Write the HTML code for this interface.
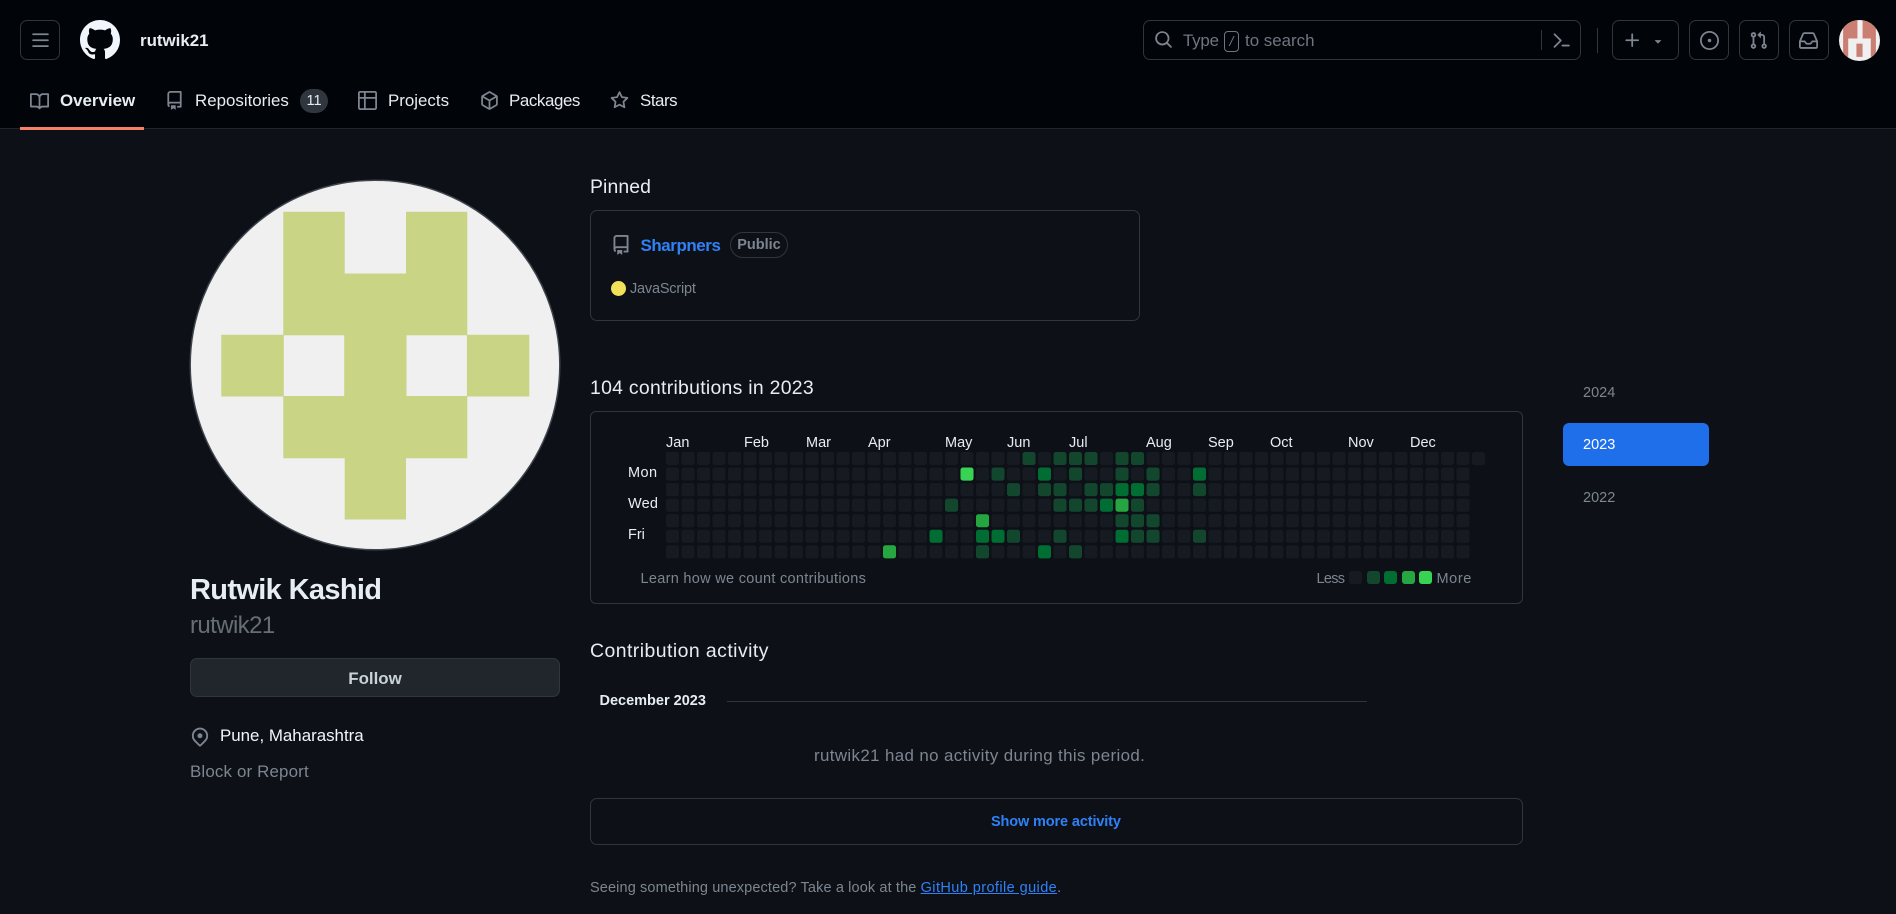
<!DOCTYPE html>
<html lang="en">
<head>
<meta charset="utf-8">
<title>rutwik21</title>
<style>
html,body{margin:0;padding:0;width:1896px;height:914px;overflow:hidden;background:#0d1117;font-family:"Liberation Sans",sans-serif;color:#e6edf3}
.a{position:absolute;box-sizing:border-box}
.t{position:absolute;white-space:nowrap;line-height:24px;height:24px}
.f14{font-size:14.5px}.f17{font-size:16.9px}.f19{font-size:19.4px}
.g{color:#7d8590}.b{font-weight:700}
.btn{position:absolute;box-sizing:border-box;top:20px;height:40px;border:1px solid #30363d;border-radius:7px}
svg.i{position:absolute;fill:#7d8590;display:block}
.m{color:#e6edf3}
a{color:inherit;text-decoration:none}
</style>
</head>
<body>
<!-- header -->
<div class="a" style="left:0;top:0;width:1896px;height:129px;background:#010409;border-bottom:1px solid #21262d"></div>
<div class="a" style="left:20px;top:127px;width:124px;height:2.5px;background:#f78166"></div>

<div class="btn" style="left:20px;width:40px"></div>
<svg class="i" style="left:31px;top:31px" width="19" height="19" viewBox="0 0 16 16"><path d="M1 2.75A.75.75 0 0 1 1.75 2h12.5a.75.75 0 0 1 0 1.5H1.75A.75.75 0 0 1 1 2.75Zm0 5A.75.75 0 0 1 1.75 7h12.5a.75.75 0 0 1 0 1.5H1.75A.75.75 0 0 1 1 7.75ZM1.75 12h12.5a.75.75 0 0 1 0 1.5H1.75a.75.75 0 0 1 0-1.5Z"/></svg>
<svg class="i" style="left:80px;top:20px;fill:#f0f6fc" width="40" height="40" viewBox="0 0 16 16"><path d="M8 0c4.42 0 8 3.58 8 8a8.013 8.013 0 0 1-5.45 7.59c-.4.08-.55-.17-.55-.38 0-.27.01-1.13.01-2.2 0-.75-.25-1.23-.54-1.48 1.78-.2 3.65-.88 3.65-3.95 0-.88-.31-1.59-.82-2.15.08-.2.36-1.02-.08-2.12 0 0-.67-.22-2.2.82-.64-.18-1.32-.27-2-.27-.68 0-1.36.09-2 .27-1.53-1.03-2.2-.82-2.2-.82-.44 1.1-.16 1.92-.08 2.12-.51.56-.82 1.28-.82 2.15 0 3.06 1.86 3.75 3.64 3.95-.23.2-.44.55-.51 1.07-.46.21-1.61.55-2.33-.66-.15-.24-.6-.83-1.23-.82-.67.01-.27.38.01.53.34.19.73.9.82 1.13.16.45.68 1.31 2.69.94 0 .67.01 1.3.01 1.49 0 .21-.15.45-.55.38A7.995 7.995 0 0 1 0 8c0-4.42 3.58-8 8-8Z"/></svg>
<span class="t f17 b" style="left:140px;top:29px;color:#e6edf3">rutwik21</span>

<svg class="i" style="left:30px;top:92px" width="19" height="19" viewBox="0 0 16 16"><path d="M0 1.75A.75.75 0 0 1 .75 1h4.253c1.227 0 2.317.59 3 1.501A3.743 3.743 0 0 1 11.006 1h4.245a.75.75 0 0 1 .75.75v10.5a.75.75 0 0 1-.75.75h-4.507a2.25 2.25 0 0 0-1.591.659l-.622.621a.75.75 0 0 1-1.06 0l-.622-.621A2.25 2.25 0 0 0 5.258 13H.75a.75.75 0 0 1-.75-.75Zm7.251 10.324.004-5.073-.002-2.253A2.25 2.25 0 0 0 5.003 2.5H1.5v9h3.757a3.75 3.75 0 0 1 1.994.574ZM8.755 4.75l-.004 7.322a3.752 3.752 0 0 1 1.992-.572H14.5v-9h-3.495a2.25 2.25 0 0 0-2.25 2.25Z"/></svg>
<span class="t f17 b" style="left:60px;top:89px">Overview</span>
<svg class="i" style="left:165px;top:91px" width="19" height="19" viewBox="0 0 16 16"><path d="M2 2.5A2.5 2.5 0 0 1 4.5 0h8.75a.75.75 0 0 1 .75.75v12.5a.75.75 0 0 1-.75.75h-2.5a.75.75 0 0 1 0-1.5h1.75v-2h-8a1 1 0 0 0-.714 1.7.75.75 0 1 1-1.072 1.05A2.495 2.495 0 0 1 2 11.5Zm10.5-1h-8a1 1 0 0 0-1 1v6.708A2.486 2.486 0 0 1 4.5 9h8ZM5 12.25a.25.25 0 0 1 .25-.25h3.5a.25.25 0 0 1 .25.25v3.25a.25.25 0 0 1-.4.2l-1.45-1.087a.249.249 0 0 0-.3 0L5.4 15.7a.25.25 0 0 1-.4-.2Z"/></svg>
<span class="t f17" style="left:195px;top:89px">Repositories</span>
<div class="a" style="left:300px;top:88.5px;width:28px;height:24px;border-radius:12px;background:#30363d;color:#e6edf3;font-size:14.5px;line-height:24px;text-align:center">11</div>
<svg class="i" style="left:358px;top:91px" width="19" height="19" viewBox="0 0 16 16"><path d="M0 1.75C0 .784.784 0 1.75 0h12.5C15.216 0 16 .784 16 1.75v12.5A1.75 1.75 0 0 1 14.25 16H1.75A1.75 1.75 0 0 1 0 14.25ZM6.5 6.5v8h7.75a.25.25 0 0 0 .25-.25V6.5Zm8-1.5V1.75a.25.25 0 0 0-.25-.25H6.5V5Zm-13 1.5v7.75c0 .138.112.25.25.25H5v-8ZM5 5V1.5H1.75a.25.25 0 0 0-.25.25V5Z"/></svg>
<span class="t f17" style="left:388px;top:89px">Projects</span>
<svg class="i" style="left:480px;top:91px" width="19" height="19" viewBox="0 0 16 16"><path d="m8.878.392 5.25 3.045c.54.314.872.89.872 1.514v6.098a1.75 1.75 0 0 1-.872 1.514l-5.25 3.045a1.75 1.75 0 0 1-1.756 0l-5.25-3.045A1.75 1.75 0 0 1 1 11.049V4.951c0-.624.332-1.201.872-1.514L7.122.392a1.75 1.75 0 0 1 1.756 0ZM7.875 1.69l-4.63 2.685L8 7.133l4.755-2.758-4.63-2.685a.248.248 0 0 0-.25 0ZM2.5 5.677v5.372c0 .09.047.171.125.216l4.625 2.683V8.432Zm6.25 8.271 4.625-2.683a.25.25 0 0 0 .125-.216V5.677L8.75 8.432Z"/></svg>
<span class="t f17" style="left:509px;top:89px;letter-spacing:-.4px">Packages</span>
<svg class="i" style="left:610px;top:91px" width="19" height="19" viewBox="0 0 16 16"><path d="M8 .25a.75.75 0 0 1 .673.418l1.882 3.815 4.21.612a.75.75 0 0 1 .416 1.279l-3.046 2.97.719 4.192a.751.751 0 0 1-1.088.791L8 12.347l-3.766 1.98a.75.75 0 0 1-1.088-.79l.72-4.194L.818 6.374a.75.75 0 0 1 .416-1.28l4.21-.611L7.327.668A.75.75 0 0 1 8 .25Zm0 2.445L6.615 5.5a.75.75 0 0 1-.564.41l-3.097.45 2.24 2.184a.75.75 0 0 1 .216.664l-.528 3.084 2.769-1.456a.75.75 0 0 1 .698 0l2.77 1.456-.53-3.084a.75.75 0 0 1 .216-.664l2.24-2.183-3.096-.45a.75.75 0 0 1-.564-.41L8 2.694Z"/></svg>
<span class="t f17" style="left:640px;top:89px;letter-spacing:-.45px">Stars</span>

<!-- search -->
<div class="btn" style="left:1143px;width:438px"></div>
<svg class="i" style="left:1154px;top:30px" width="19" height="19" viewBox="0 0 16 16"><path d="M10.68 11.74a6 6 0 0 1-7.922-8.982 6 6 0 0 1 8.982 7.922l3.04 3.04a.749.749 0 0 1-.326 1.275.749.749 0 0 1-.734-.215ZM11.5 7a4.499 4.499 0 1 0-8.997 0A4.499 4.499 0 0 0 11.5 7Z"/></svg>
<span class="t f17" style="left:1183px;top:29px;color:#6e7681;letter-spacing:-.2px">Type</span>
<div class="a" style="left:1224px;top:31px;width:15px;height:21px;border:1px solid #6e7681;border-radius:4px;color:#6e7681;font-size:14px;line-height:19px;text-align:center;font-style:italic">/</div>
<span class="t f17" style="left:1245px;top:29px;color:#6e7681">to search</span>
<div class="a" style="left:1541px;top:30px;width:1px;height:20px;background:#30363d"></div>
<svg class="i" style="left:1552px;top:31px" width="19" height="19" viewBox="0 0 16 16"><path d="m6.354 8.04-4.773 4.773a.75.75 0 1 0 1.061 1.06L7.945 8.57a.75.75 0 0 0 0-1.06L2.642 2.206a.75.75 0 0 0-1.06 1.061L6.353 8.04ZM8.75 11.5a.75.75 0 0 0 0 1.5h5.5a.75.75 0 0 0 0-1.5h-5.5Z"/></svg>
<div class="a" style="left:1597px;top:28px;width:1px;height:25px;background:#30363d"></div>

<div class="btn" style="left:1612px;width:67px"></div>
<svg class="i" style="left:1622.5px;top:31px" width="19" height="19" viewBox="0 0 16 16"><path d="M7.75 2a.75.75 0 0 1 .75.75V7h4.25a.75.75 0 0 1 0 1.5H8.5v4.25a.75.75 0 0 1-1.5 0V8.5H2.75a.75.75 0 0 1 0-1.5H7V2.75A.75.75 0 0 1 7.75 2Z"/></svg>
<svg class="i" style="left:1651px;top:33.5px" width="14" height="14" viewBox="0 0 16 16"><path d="m4.427 7.427 3.396 3.396a.25.25 0 0 0 .354 0l3.396-3.396A.25.25 0 0 0 11.396 7H4.604a.25.25 0 0 0-.177.427Z"/></svg>
<div class="btn" style="left:1689px;width:40px"></div>
<svg class="i" style="left:1700px;top:31px" width="19" height="19" viewBox="0 0 16 16"><path d="M8 9.5a1.5 1.5 0 1 0 0-3 1.5 1.5 0 0 0 0 3Z"/><path d="M8 0a8 8 0 1 1 0 16A8 8 0 0 1 8 0ZM1.5 8a6.5 6.5 0 1 0 13 0 6.5 6.5 0 0 0-13 0Z"/></svg>
<div class="btn" style="left:1739px;width:40px"></div>
<svg class="i" style="left:1749px;top:31px" width="19" height="19" viewBox="0 0 16 16"><path d="M1.5 3.25a2.25 2.25 0 1 1 3 2.122v5.256a2.251 2.251 0 1 1-1.5 0V5.372A2.25 2.25 0 0 1 1.5 3.25Zm5.677-.177L9.573.677A.25.25 0 0 1 10 .854V2.5h1A2.5 2.5 0 0 1 13.5 5v5.628a2.251 2.251 0 1 1-1.5 0V5a1 1 0 0 0-1-1h-1v1.646a.25.25 0 0 1-.427.177L7.177 3.427a.25.25 0 0 1 0-.354ZM3.75 2.5a.75.75 0 1 0 0 1.5.75.75 0 0 0 0-1.5Zm0 9.5a.75.75 0 1 0 0 1.5.75.75 0 0 0 0-1.5Zm8.25.75a.75.75 0 1 0 1.5 0 .75.75 0 0 0-1.5 0Z"/></svg>
<div class="btn" style="left:1789px;width:40px"></div>
<svg class="i" style="left:1799px;top:31px" width="19" height="19" viewBox="0 0 16 16"><path d="M2.8 2.06A1.75 1.75 0 0 1 4.41 1h7.18c.7 0 1.333.417 1.61 1.06l2.74 6.395c.04.093.06.194.06.295v4.5A1.75 1.75 0 0 1 14.25 15H1.75A1.75 1.75 0 0 1 0 13.25v-4.5c0-.101.02-.202.06-.295Zm1.61.44a.25.25 0 0 0-.23.152L1.887 8H4.75a.75.75 0 0 1 .6.3L6.625 10h2.75l1.275-1.7a.75.75 0 0 1 .6-.3h2.863L11.82 2.652a.25.25 0 0 0-.23-.152Zm10.09 7h-2.875l-1.275 1.7a.75.75 0 0 1-.6.3h-3.5a.75.75 0 0 1-.6-.3L4.375 9.5H1.5v3.75c0 .138.112.25.25.25h12.5a.25.25 0 0 0 .25-.25Z"/></svg>
<!-- small avatar -->
<svg class="a" style="left:1839px;top:20px" width="41" height="41" viewBox="0 0 40 40"><defs><clipPath id="c1"><circle cx="20" cy="20" r="20"/></clipPath></defs><g clip-path="url(#c1)"><rect width="40" height="40" fill="#f0f0f0"/><path fill="#cb7f72" d="M4 0h14v18H9v18H4ZM23 0h13v36h-5V18h-8ZM17 23h6v13h-6Z"/></g></svg>

<!-- big avatar -->
<svg class="a" style="left:189px;top:178.5px" width="372" height="372" viewBox="189 178.5 372 372"><circle cx="375" cy="364.5" r="184.8" fill="#f0f0f0" stroke="#3d444d" stroke-width="1.5"/><path fill="#c9d485" d="M283.3 211.3h61.4V273h61.3v-61.7h61.3v122.9H529.3v61.8H467.3v61.7H406V519H344.7v-61.3H283.3V396h-62v-61.7h62Z"/><rect x="283.8" y="334.8" width="60.4" height="60.7" fill="#f0f0f0"/><rect x="406.5" y="334.8" width="60.4" height="60.7" fill="#f0f0f0"/></svg>

<span class="t b" style="left:190px;top:578px;font-size:29px;color:#e6edf3;letter-spacing:-.65px">Rutwik Kashid</span>
<span class="t" style="left:190px;top:614px;font-size:24px;color:#666d76;letter-spacing:-.6px">rutwik21</span>
<div class="a" style="left:190px;top:658px;width:370px;height:39px;background:#21262d;border:1px solid #30363d;border-radius:7px;color:#c9d1d9;font-size:16.9px;font-weight:700;line-height:39px;text-align:center">Follow</div>
<svg class="i" style="left:190px;top:727px" width="20" height="20" viewBox="0 0 16 16"><path d="m12.596 11.596-3.535 3.536a1.5 1.5 0 0 1-2.122 0l-3.535-3.536a6.5 6.5 0 1 1 9.192-9.193 6.5 6.5 0 0 1 0 9.193Zm-1.06-8.132v-.001a5 5 0 1 0-7.072 7.072L8 14.07l3.536-3.534a5 5 0 0 0 0-7.072ZM8 9a2 2 0 1 1-.001-3.999A2 2 0 0 1 8 9Z"/></svg>
<span class="t f17" style="left:220px;top:724px;color:#f0f6fc">Pune, Maharashtra</span>
<span class="t f17 g" style="left:190px;top:760px;letter-spacing:.16px">Block or Report</span>

<!-- pinned -->
<span class="t f19" style="left:590px;top:175px;letter-spacing:.1px">Pinned</span>
<div class="a" style="left:590px;top:210px;width:550px;height:111px;border:1px solid #30363d;border-radius:7px"></div>
<svg class="i" style="left:611px;top:235px" width="20" height="20" viewBox="0 0 16 16"><path d="M2 2.5A2.5 2.5 0 0 1 4.5 0h8.75a.75.75 0 0 1 .75.75v12.5a.75.75 0 0 1-.75.75h-2.5a.75.75 0 0 1 0-1.5h1.75v-2h-8a1 1 0 0 0-.714 1.7.75.75 0 1 1-1.072 1.05A2.495 2.495 0 0 1 2 11.5Zm10.5-1h-8a1 1 0 0 0-1 1v6.708A2.486 2.486 0 0 1 4.5 9h8ZM5 12.25a.25.25 0 0 1 .25-.25h3.5a.25.25 0 0 1 .25.25v3.25a.25.25 0 0 1-.4.2l-1.45-1.087a.249.249 0 0 0-.3 0L5.4 15.7a.25.25 0 0 1-.4-.2Z"/></svg>
<span class="t f17 b" style="left:640.5px;top:233.5px;color:#2f81f7;letter-spacing:-.4px">Sharpners</span>
<div class="a" style="left:730px;top:232px;width:58px;height:26px;border:1px solid #30363d;border-radius:13px;color:#7d8590;font-size:14.5px;font-weight:700;line-height:25px;text-align:center">Public</div>
<div class="a" style="left:611px;top:281px;width:15px;height:15px;border-radius:50%;background:#f1e05a"></div>
<span class="t f14 g" style="left:630px;top:277px;letter-spacing:-.2px">JavaScript</span>

<!-- contributions -->
<span class="t f19" style="left:590px;top:375.5px;letter-spacing:.29px">104 contributions in 2023</span>
<div class="a" style="left:590px;top:411px;width:933px;height:193px;border:1px solid #30363d;border-radius:6px"></div>
<span class="t f14 m" style="left:666px;top:430.5px">Jan</span>
<span class="t f14 m" style="left:744px;top:430.5px">Feb</span>
<span class="t f14 m" style="left:806px;top:430.5px">Mar</span>
<span class="t f14 m" style="left:868px;top:430.5px">Apr</span>
<span class="t f14 m" style="left:945px;top:430.5px">May</span>
<span class="t f14 m" style="left:1007px;top:430.5px">Jun</span>
<span class="t f14 m" style="left:1069px;top:430.5px">Jul</span>
<span class="t f14 m" style="left:1146px;top:430.5px">Aug</span>
<span class="t f14 m" style="left:1208px;top:430.5px">Sep</span>
<span class="t f14 m" style="left:1270px;top:430.5px">Oct</span>
<span class="t f14 m" style="left:1348px;top:430.5px">Nov</span>
<span class="t f14 m" style="left:1410px;top:430.5px">Dec</span>
<span class="t f14 m" style="left:628px;top:461px;letter-spacing:.4px">Mon</span>
<span class="t f14 m" style="left:628px;top:492px;letter-spacing:.2px">Wed</span>
<span class="t f14 m" style="left:628px;top:523px">Fri</span>

<svg class="a" style="left:666px;top:451.6px" width="830" height="110" viewBox="0 0 830 110">
<defs><pattern id="p" patternUnits="userSpaceOnUse" width="15.5" height="15.55"><rect width="13" height="13" rx="2.5" fill="#161b22"/></pattern></defs>
<rect x="0" y="0" width="806" height="108.85" fill="url(#p)"/>
<rect x="806" y="0" width="13" height="13" rx="2.5" fill="#161b22"/>
<g transform="scale(15.5,15.55)">
<g fill="#12472d">
<rect x="23" y="0" width=".84" height=".84" rx=".16"/><rect x="25" y="0" width=".84" height=".84" rx=".16"/><rect x="26" y="0" width=".84" height=".84" rx=".16"/><rect x="27" y="0" width=".84" height=".84" rx=".16"/><rect x="29" y="0" width=".84" height=".84" rx=".16"/><rect x="30" y="0" width=".84" height=".84" rx=".16"/>
<rect x="21" y="1" width=".84" height=".84" rx=".16"/><rect x="26" y="1" width=".84" height=".84" rx=".16"/><rect x="29" y="1" width=".84" height=".84" rx=".16"/><rect x="31" y="1" width=".84" height=".84" rx=".16"/>
<rect x="22" y="2" width=".84" height=".84" rx=".16"/><rect x="24" y="2" width=".84" height=".84" rx=".16"/><rect x="25" y="2" width=".84" height=".84" rx=".16"/><rect x="27" y="2" width=".84" height=".84" rx=".16"/><rect x="28" y="2" width=".84" height=".84" rx=".16"/><rect x="31" y="2" width=".84" height=".84" rx=".16"/><rect x="34" y="2" width=".84" height=".84" rx=".16"/>
<rect x="18" y="3" width=".84" height=".84" rx=".16"/><rect x="25" y="3" width=".84" height=".84" rx=".16"/><rect x="26" y="3" width=".84" height=".84" rx=".16"/><rect x="27" y="3" width=".84" height=".84" rx=".16"/><rect x="30" y="3" width=".84" height=".84" rx=".16"/>
<rect x="29" y="4" width=".84" height=".84" rx=".16"/><rect x="30" y="4" width=".84" height=".84" rx=".16"/><rect x="31" y="4" width=".84" height=".84" rx=".16"/>
<rect x="22" y="5" width=".84" height=".84" rx=".16"/><rect x="25" y="5" width=".84" height=".84" rx=".16"/><rect x="30" y="5" width=".84" height=".84" rx=".16"/><rect x="31" y="5" width=".84" height=".84" rx=".16"/><rect x="34" y="5" width=".84" height=".84" rx=".16"/>
<rect x="20" y="6" width=".84" height=".84" rx=".16"/><rect x="26" y="6" width=".84" height=".84" rx=".16"/>
</g>
<g fill="#006d32">
<rect x="24" y="1" width=".84" height=".84" rx=".16"/><rect x="34" y="1" width=".84" height=".84" rx=".16"/>
<rect x="29" y="2" width=".84" height=".84" rx=".16"/><rect x="30" y="2" width=".84" height=".84" rx=".16"/>
<rect x="28" y="3" width=".84" height=".84" rx=".16"/>
<rect x="17" y="5" width=".84" height=".84" rx=".16"/><rect x="20" y="5" width=".84" height=".84" rx=".16"/><rect x="21" y="5" width=".84" height=".84" rx=".16"/><rect x="29" y="5" width=".84" height=".84" rx=".16"/>
<rect x="24" y="6" width=".84" height=".84" rx=".16"/>
</g>
<g fill="#26a641">
<rect x="29" y="3" width=".84" height=".84" rx=".16"/><rect x="20" y="4" width=".84" height=".84" rx=".16"/><rect x="14" y="6" width=".84" height=".84" rx=".16"/>
</g>
<rect x="19" y="1" width=".84" height=".84" rx=".16" fill="#39d353"/>
</g>
</svg>

<span class="t f14 g" style="left:640.5px;top:566.5px;letter-spacing:.3px">Learn how we count contributions</span>
<span class="t f14 g" style="left:1316.5px;top:566.5px;letter-spacing:-.7px">Less</span>
<div class="a" style="left:1349px;top:571px;width:13px;height:13px;border-radius:3px;background:#161b22"></div>
<div class="a" style="left:1367px;top:571px;width:13px;height:13px;border-radius:3px;background:#12472d"></div>
<div class="a" style="left:1384px;top:571px;width:13px;height:13px;border-radius:3px;background:#006d32"></div>
<div class="a" style="left:1402px;top:571px;width:13px;height:13px;border-radius:3px;background:#26a641"></div>
<div class="a" style="left:1419px;top:571px;width:13px;height:13px;border-radius:3px;background:#39d353"></div>
<span class="t f14 g" style="left:1436.5px;top:566.5px;letter-spacing:.6px">More</span>

<!-- years -->
<span class="t f14 g" style="left:1583px;top:381px">2024</span>
<div class="a" style="left:1563px;top:423px;width:146px;height:43px;border-radius:6px;background:#1f6feb"></div>
<span class="t f14" style="left:1583px;top:433px;color:#fff">2023</span>
<span class="t f14 g" style="left:1583px;top:486px">2022</span>

<!-- activity -->
<span class="t f19" style="left:590px;top:638.5px;letter-spacing:.46px">Contribution activity</span>
<span class="t f14 b" style="left:599.5px;top:689px">December 2023</span>
<div class="a" style="left:727px;top:701px;width:640px;height:1px;background:#30363d"></div>
<span class="t f17 g" style="left:814px;top:744px;letter-spacing:.38px">rutwik21 had no activity during this period.</span>
<div class="a" style="left:590px;top:798px;width:933px;height:47px;border:1px solid #30363d;border-radius:7px"></div>
<span class="t f14 b" style="left:991px;top:810px;color:#2f81f7;letter-spacing:-.13px">Show more activity</span>
<span class="t f14 g" style="left:590px;top:875.5px;letter-spacing:.125px">Seeing something unexpected? Take a look at the <a href="#" style="color:#2f81f7;text-decoration:underline;letter-spacing:.42px">GitHub profile guide</a>.</span>
</body>
</html>
